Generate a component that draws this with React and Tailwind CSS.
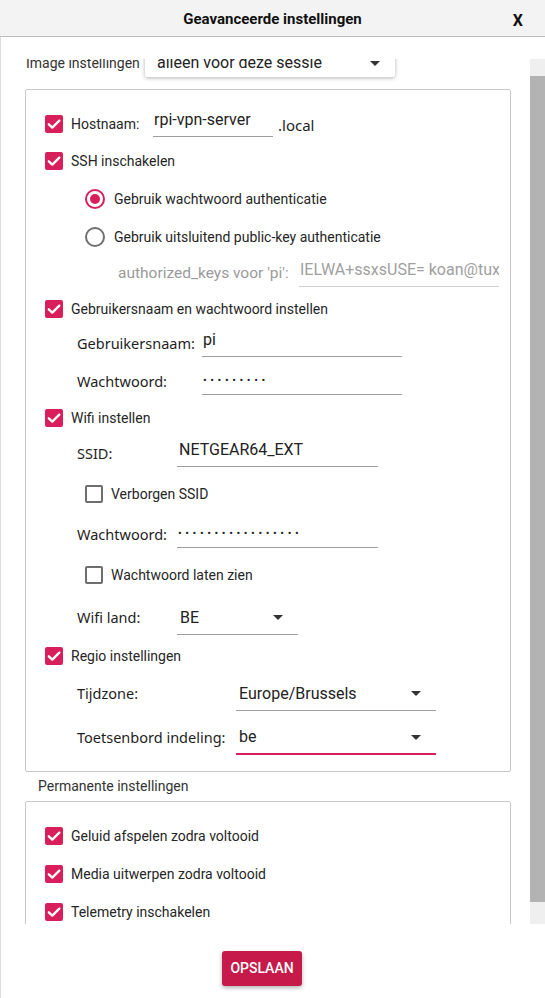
import React from "react";

const Check = () => (
  <div className="w-[18px] h-[18px] rounded-[2px] bg-[#d81e5b] flex items-center justify-center shrink-0">
    <svg width="18" height="18" viewBox="0 0 18 18">
      <path d="M3.8 9.3 L7.3 12.6 L14.3 5.6" stroke="white" strokeWidth="2.3" fill="none" strokeLinecap="round" strokeLinejoin="round" />
    </svg>
  </div>
);

const EmptyBox = () => (
  <div className="w-[18px] h-[18px] rounded-[2px] border-2 border-[#6e6e6e] shrink-0" />
);

const Arrow = () => (
  <div className="w-0 h-0 border-l-[5px] border-r-[5px] border-t-[5px] border-l-transparent border-r-transparent border-t-[#333]" />
);

const CheckRow = ({ h, label }) => (
  <div className={`flex items-center ${h}`}>
    <Check />
    <span className="ml-[8px] text-[14px] text-[#262626]">{label}</span>
  </div>
);

const SubCheck = ({ h, label }) => (
  <div className={`flex items-center ${h} ml-[40px]`}>
    <EmptyBox />
    <span className="ml-[8px] text-[14px] text-[#262626]">{label}</span>
  </div>
);

const Radio = ({ h, label, on }) => (
  <div className={`flex items-center ${h} ml-[40px]`}>
    {on ? (
      <div className="w-[20px] h-[20px] rounded-full border-2 border-[#d81e5b] flex items-center justify-center">
        <div className="w-[10px] h-[10px] rounded-full bg-[#d81e5b]" />
      </div>
    ) : (
      <div className="w-[20px] h-[20px] rounded-full border-2 border-[#707070]" />
    )}
    <span className="ml-[9px] text-[14px] text-[#262626]">{label}</span>
  </div>
);

const Label = ({ w, children }) => (
  <span className={`${w} shrink-0 text-[14.5px] text-[#1e1e1e] font-['Noto_Sans',sans-serif]`}>{children}</span>
);

const Input = ({ w, children, gray }) => (
  <div className={`${w} h-[26px] border-b ${gray ? "border-[#cfcfcf] text-[#a0a0a0]" : "border-[#9e9e9e] text-[#222]"} text-[16px] leading-[18px] pl-[1px] whitespace-nowrap overflow-hidden`}>
    {children}
  </div>
);

const Dots = ({ n }) => (
  <span className="text-[11px] tracking-[3.6px] leading-[18px] relative top-[1px]">{"•".repeat(n)}</span>
);

const Select = ({ w, value, active }) => (
  <div className={`${w} h-[34px] ${active ? "border-b-2 border-[#d81e5b]" : "border-b border-[#9e9e9e]"} flex items-center justify-between pl-[3px] pr-[15px] text-[16px] text-[#222]`}>
    <span>{value}</span>
    <Arrow />
  </div>
);

export default function App() {
  return (
    <div className="w-[545px] h-[998px] bg-white overflow-hidden flex flex-col text-[#212121] font-[Roboto,sans-serif]">
      <div className="h-[37px] shrink-0 bg-[#f3f3f3] border-b border-[#bdbdbd] relative flex items-center justify-center">
        <span className="text-[15px] font-bold text-[#111] relative top-[1px]">Geavanceerde instellingen</span>
        <span className="absolute right-[22px] top-[9px] text-[16px] font-bold text-[#111]">X</span>
      </div>

      <div className="flex-1 flex flex-col border-l border-[#dcdcdc]">
        <div className="mt-[22px] h-[865px] flex">
          <div className="flex-1 overflow-hidden">
            <div className="-mt-[10px]">
              {/* Image instellingen */}
              <div className="flex items-center h-[28px] pl-[25px]">
                <span className="text-[14px] text-[#333] w-[119px] shrink-0">Image instellingen</span>
                <div className="w-[250px] h-[28px] bg-white rounded-[2px] shadow-[0_1px_4px_rgba(0,0,0,0.3)] flex items-center justify-between pl-[12px] pr-[15px]">
                  <span className="text-[16px] text-[#222]">alleen voor deze sessie</span>
                  <Arrow />
                </div>
              </div>

              {/* Main box */}
              <div className="mt-[12px] ml-[24px] w-[486px] border border-[#c8c8c8] rounded-[2px] pt-[15px] pb-[12px] pl-[19px]">
                <div className="flex items-center h-[38px]">
                  <Check />
                  <span className="ml-[8px] w-[82px] shrink-0 text-[14px] text-[#262626]">Hostnaam:</span>
                  <Input w="w-[120px]">rpi-vpn-server</Input>
                  <span className="ml-[5px] mt-[3px] text-[15px] text-[#1e1e1e] font-['Noto_Sans',sans-serif]">.local</span>
                </div>
                <CheckRow h="h-[36px]" label="SSH inschakelen" />
                <Radio h="h-[40px]" on label="Gebruik wachtwoord authenticatie" />
                <Radio h="h-[36px]" label="Gebruik uitsluitend public-key authenticatie" />
                <div className="flex items-center h-[38px] ml-[73px]">
                  <span className="w-[181px] shrink-0 text-[15.5px] text-[#9a9a9a]">authorized_keys voor 'pi':</span>
                  <Input w="w-[200px]" gray>IELWA+ssxsUSE= koan@tux</Input>
                </div>
                <CheckRow h="h-[32px]" label="Gebruikersnaam en wachtwoord instellen" />
                <div className="flex items-center h-[38px] ml-[32px]">
                  <Label w="w-[125px]">Gebruikersnaam:</Label>
                  <Input w="w-[200px]">pi</Input>
                </div>
                <div className="flex items-center h-[38px] ml-[32px]">
                  <Label w="w-[125px]">Wachtwoord:</Label>
                  <Input w="w-[200px]"><Dots n={9} /></Input>
                </div>
                <CheckRow h="h-[34px]" label="Wifi instellen" />
                <div className="flex items-center h-[38px] ml-[32px]">
                  <Label w="w-[100px]">SSID:</Label>
                  <Input w="w-[201px]"><span className="pl-[1px]">NETGEAR64_EXT</span></Input>
                </div>
                <SubCheck h="h-[42px]" label="Verborgen SSID" />
                <div className="flex items-center h-[40px] ml-[32px]">
                  <Label w="w-[100px]">Wachtwoord:</Label>
                  <Input w="w-[201px]"><Dots n={17} /></Input>
                </div>
                <SubCheck h="h-[40px]" label="Wachtwoord laten zien" />
                <div className="flex items-center h-[46px] ml-[32px]">
                  <Label w="w-[100px]">Wifi land:</Label>
                  <Select w="w-[121px]" value="BE" />
                </div>
                <CheckRow h="h-[30px]" label="Regio instellingen" />
                <div className="flex items-center h-[46px] ml-[32px]">
                  <Label w="w-[159px]">Tijdzone:</Label>
                  <Select w="w-[200px]" value="Europe/Brussels" />
                </div>
                <div className="flex items-center h-[42px] ml-[32px]">
                  <Label w="w-[159px]">Toetsenbord indeling:</Label>
                  <Select w="w-[200px]" value="be" active />
                </div>
              </div>

              <div className="h-[28px] flex items-center pl-[37px] text-[14px] text-[#333]">Permanente instellingen</div>

              <div className="mt-[1px] ml-[24px] w-[486px] border border-[#c8c8c8] rounded-[2px] pt-[15px] pb-[12px] pl-[19px]">
                <CheckRow h="h-[38px]" label="Geluid afspelen zodra voltooid" />
                <CheckRow h="h-[38px]" label="Media uitwerpen zodra voltooid" />
                <CheckRow h="h-[38px]" label="Telemetry inschakelen" />
              </div>
            </div>
          </div>
          <div className="w-[15px] shrink-0 bg-[#efefef] pt-[17px] pb-[22px] flex">
            <div className="flex-1 bg-[#b3b3b3]" />
          </div>
        </div>

        <div className="pt-[27px] flex">
          <button className="ml-[221px] w-[80px] h-[35px] bg-[#c51a4a] text-white text-[14px] font-medium rounded-[3px] shadow-[0_2px_4px_rgba(0,0,0,0.3)]">
            OPSLAAN
          </button>
        </div>
      </div>
    </div>
  );
}
